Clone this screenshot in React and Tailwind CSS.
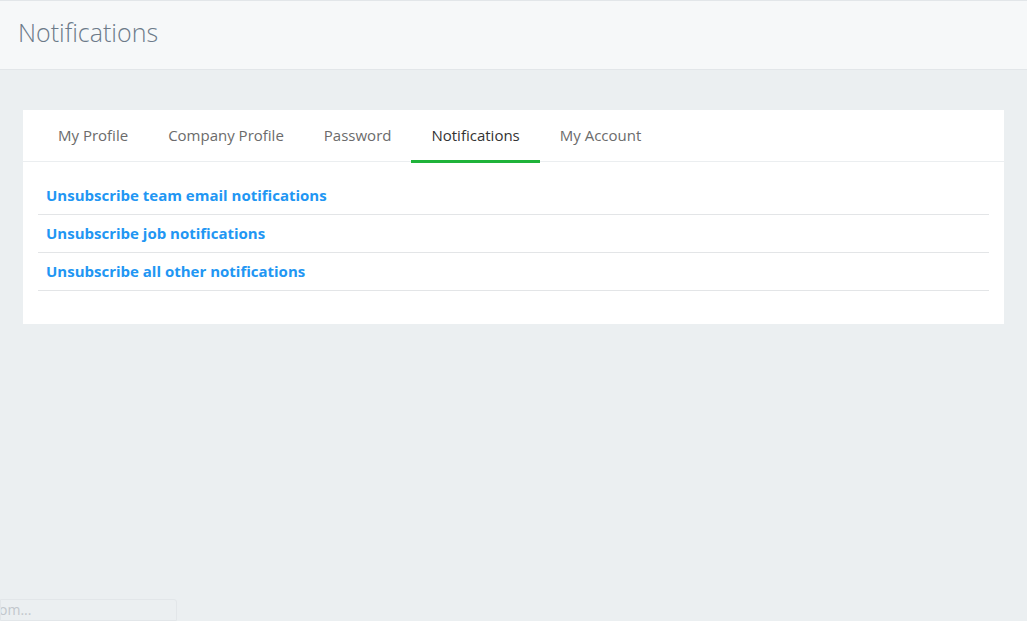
import { useState } from "react";

const tabs = ["My Profile", "Company Profile", "Password", "Notifications", "My Account"];

const links = [
  "Unsubscribe team email notifications",
  "Unsubscribe job notifications",
  "Unsubscribe all other notifications",
];

export default function App() {
  const [active, setActive] = useState("Notifications");

  return (
    <div
      className="relative min-h-[621px] bg-[#ebeff1]"
      style={{ fontFamily: '"Open Sans", "Liberation Sans", sans-serif' }}
    >
      <div className="h-[70px] border-t border-b border-[#e2e6e9] bg-[#f6f8f9] px-[18px] flex items-center">
        <h1 className="text-[25px] font-light text-[#6c7a89] leading-none -mt-[6px]">
          Notifications
        </h1>
      </div>

      <div className="px-[23px] pt-[40px]">
        <div className="bg-white pb-[33px]">
          <div className="flex border-b border-[#ebeef0] px-[15px] h-[52px]">
            {tabs.map((t) => (
              <button
                key={t}
                onClick={() => setActive(t)}
                className={
                  "relative px-5 text-[15px] " +
                  (active === t ? "text-[#333333]" : "text-[#6b6b6b]")
                }
              >
                <span>{t}</span>
                {active === t && (
                  <span className="absolute left-0 right-0 -bottom-[2px] h-[3px] bg-[#1fb33a]" />
                )}
              </button>
            ))}
          </div>

          <div className="px-[15px] pt-[15px]">
            {links.map((l) => (
              <div key={l} className="h-[38px] border-b border-[#e3e5e7] px-2 flex items-center">
                <a href="#" className="text-[15px] font-bold text-[#2196f3]">
                  {l}
                </a>
              </div>
            ))}
          </div>
        </div>
      </div>

      <div className="absolute left-0 bottom-0 w-[177px] h-[22px] border border-[#e2e6e9] rounded-tr-[3px] bg-[#ebeff1] overflow-hidden">
        <span className="block -ml-[2px] text-[14px] leading-[20px] text-[#c2c7cc]">om...</span>
      </div>
    </div>
  );
}
